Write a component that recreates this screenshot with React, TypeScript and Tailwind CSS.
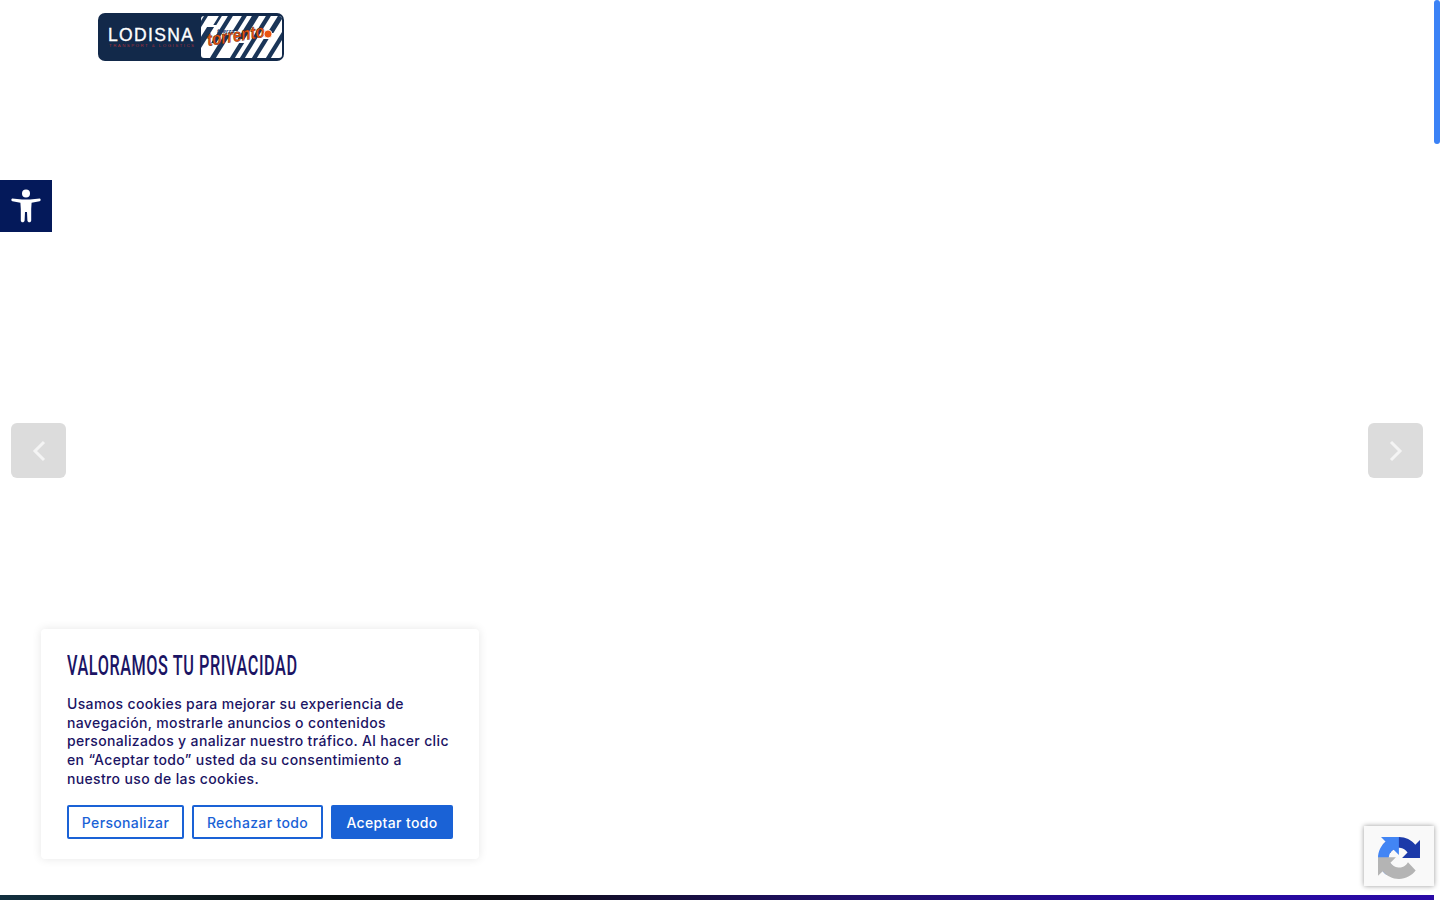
// x offset, stripe width, and where a stripe starts and stops
const stripes = [
  { x: 98, w: 4, y1: 0, y2: 48 },
  { x: 108, w: 7, y1: 14, y2: 48 },
  { x: 113, w: 3, y1: 0, y2: 12 },
  { x: 122, w: 5, y1: 0, y2: 30 },
  { x: 130, w: 6, y1: 22, y2: 48 },
  { x: 136, w: 5, y1: 0, y2: 18 },
  { x: 146, w: 7, y1: 0, y2: 26 },
  { x: 150, w: 5, y1: 30, y2: 48 },
  { x: 160, w: 5, y1: 0, y2: 48 },
  { x: 172, w: 6, y1: 0, y2: 20 },
  { x: 172, w: 5, y1: 26, y2: 48 },
  { x: 186, w: 5, y1: 0, y2: 48 },
];

const Logo = () => (
  <svg width="186" height="48" viewBox="0 0 186 48" className="block">
    <rect width="186" height="48" rx="7" fill="#12294a" />
    <clipPath id="panel">
      <rect x="103" y="3" width="81" height="42" rx="3" />
    </clipPath>
    <g clipPath="url(#panel)">
      <rect x="103" y="3" width="81" height="42" fill="#ffffff" />
      {stripes.map((s, i) => {
        // stripes lean to the right going up
        const top = s.x + (48 - s.y1) * 0.62 - 20;
        const bottom = s.x + (48 - s.y2) * 0.62 - 20;
        return (
          <path
            key={i}
            d={`M${bottom} ${s.y2} L${top} ${s.y1} L${top + s.w} ${s.y1} L${bottom + s.w} ${s.y2} Z`}
            fill="#1a3558"
          />
        );
      })}
    </g>
    <text x="10" y="28" fill="#ffffff" stroke="#ffffff" strokeWidth="0.35" fontFamily="Liberation Sans, sans-serif" fontSize="17.5" textLength="85">LODISNA</text>
    <text x="11" y="33.5" fill="#a3303c" fontFamily="Liberation Sans, sans-serif" fontSize="4.4" textLength="85">TRANSPORT &amp; LOGISTICS</text>
    <text x="119" y="20" fill="#17356b" fontFamily="Liberation Sans, sans-serif" fontSize="6" fontWeight="700" fontStyle="italic">fuerza</text>
    <text x="110" y="33" fill="#ea5410" stroke="#3a1505" strokeWidth="0.4" fontFamily="Liberation Sans, sans-serif" fontSize="18" fontWeight="700" fontStyle="italic" transform="rotate(-9 110 33)" textLength="58" lengthAdjust="spacingAndGlyphs">torrento</text>
    <circle cx="170" cy="21" r="4" fill="#ea5410" stroke="#ffffff" strokeWidth="0.8" />
  </svg>
);

const AccessIcon = () => (
  <svg width="30" height="34" viewBox="0 0 30 34" fill="#ffffff">
    <circle cx="15" cy="4.5" r="4" />
    <path d="M1.2 9.4 C0 9.8 0 11.9 1.4 12.2 L9.4 13.8 L9.8 20 L9.8 31.4 C9.8 33.8 13.4 33.8 13.6 31.4 L14 23 L16 23 L16.4 31.4 C16.6 33.8 20.2 33.8 20.2 31.4 L20.2 20 L20.6 13.8 L28.6 12.2 C30 11.9 30 9.8 28.8 9.4 L19 10.4 L11 10.4 Z" />
  </svg>
);

const RecaptchaIcon = () => (
  <svg width="42" height="42" viewBox="0 0 64 64">
    <path d="M64 31.955l-.033-1.37V4.687l-7.16 7.16C50.948 4.674 42.033.093 32.05.093c-10.4 0-19.622 4.96-25.458 12.64l11.736 11.86a15.55 15.55 0 0 1 4.754-5.334c2.05-1.6 4.952-2.906 8.968-2.906.485 0 .86.057 1.135.163 4.976.393 9.288 3.14 11.828 7.124l-8.307 8.307 32.294.008" fill="#1c3aa9" />
    <path d="M31.862 0l-1.37.033H4.594l7.16 7.16C4.58 13.052 0 21.967 0 31.95c0 10.4 4.96 19.622 12.64 25.458l11.86-11.736a15.55 15.55 0 0 1-5.334-4.754c-1.6-2.05-2.906-4.952-2.906-8.968 0-.485.057-.86.163-1.135.393-4.976 3.14-9.288 7.124-11.828l8.307 8.307L31.862 0" fill="#4285f4" />
    <path d="M.001 31.955l.033 1.37v25.9l7.16-7.16c5.86 7.173 14.775 11.754 24.76 11.754 10.4 0 19.622-4.96 25.458-12.64L45.677 38.32a15.55 15.55 0 0 1-4.754 5.334c-2.05 1.6-4.952 2.906-8.968 2.906-.485 0-.86-.057-1.135-.163-4.976-.393-9.288-3.14-11.828-7.124l8.307-8.307-32.3.008" fill="#b4b4b4" />
  </svg>
);

const Chevron = ({ left }: { left?: boolean }) => (
  <svg width="14" height="22" viewBox="0 0 14 22" fill="none" stroke="#f4f4f4" strokeWidth="3">
    <path d={left ? "M12 2 L3 11 L12 20" : "M2 2 L11 11 L2 20"} />
  </svg>
);

export default function App() {
  return (
    <div className="relative flex h-screen w-full overflow-hidden bg-white font-['Inter',sans-serif]">
      <main className="relative flex min-w-0 flex-1 flex-col">
        <header className="pl-[98px] pt-[13px]">
          <Logo />
        </header>

        <section className="flex-1" />

        <div className="h-[5px] bg-[linear-gradient(90deg,#12303f_0%,#0b0f0e_22%,#0d0d14_35%,#21106b_60%,#24089a_80%,#2a0aa6_100%)]" />

        <button className="absolute left-[11px] top-[423px] flex h-[55px] w-[55px] items-center justify-center rounded-[6px] bg-[#dcdcdc]">
          <Chevron left />
        </button>
        <button className="absolute right-[11px] top-[423px] flex h-[55px] w-[55px] items-center justify-center rounded-[6px] bg-[#dcdcdc]">
          <Chevron />
        </button>

        <button className="absolute left-0 top-[180px] flex h-[52px] w-[52px] items-center justify-center bg-[#04195a]">
          <AccessIcon />
        </button>

        <div className="absolute left-[41px] top-[629px] h-[230px] w-[438px] rounded-[4px] bg-white px-[26px] pt-[21px] shadow-[0_0_10px_rgba(0,0,0,0.1)]">
          <h2 className="origin-left scale-x-[0.58] whitespace-nowrap font-['Roboto',sans-serif] text-[28px] font-medium leading-[32px] tracking-[1px] text-[#1b1464]">
            VALORAMOS TU PRIVACIDAD
          </h2>
          <p className="mt-[13px] text-[14px] font-medium leading-[18.7px] tracking-[0.35px] text-[#1b1464]">
            Usamos cookies para mejorar su experiencia de navegación, mostrarle anuncios o contenidos personalizados y analizar nuestro tráfico. Al hacer clic en “Aceptar todo” usted da su consentimiento a nuestro uso de las cookies.
          </p>
          <div className="mt-[16px] flex gap-2 text-[14px] font-medium tracking-[0.35px]">
            <button className="h-[34px] w-[117px] rounded-[2px] border-2 border-[#1a62d6] pt-px text-[#1a62d6]">Personalizar</button>
            <button className="h-[34px] w-[131px] rounded-[2px] border-2 border-[#1a62d6] pt-px text-[#1a62d6]">Rechazar todo</button>
            <button className="h-[34px] w-[122px] rounded-[2px] bg-[#1a62d6] pt-px text-white">Aceptar todo</button>
          </div>
        </div>

        <div className="absolute bottom-[14px] right-0 flex h-[60px] w-[70px] items-center justify-center bg-[#f9f9f9] pt-[3px] shadow-[0_0_5px_rgba(0,0,0,0.4)]">
          <RecaptchaIcon />
        </div>
      </main>

      <aside className="w-[6px] shrink-0 bg-white">
        <div className="h-[144px] rounded-[3px] bg-[#3b82f6]" />
      </aside>
    </div>
  );
}
